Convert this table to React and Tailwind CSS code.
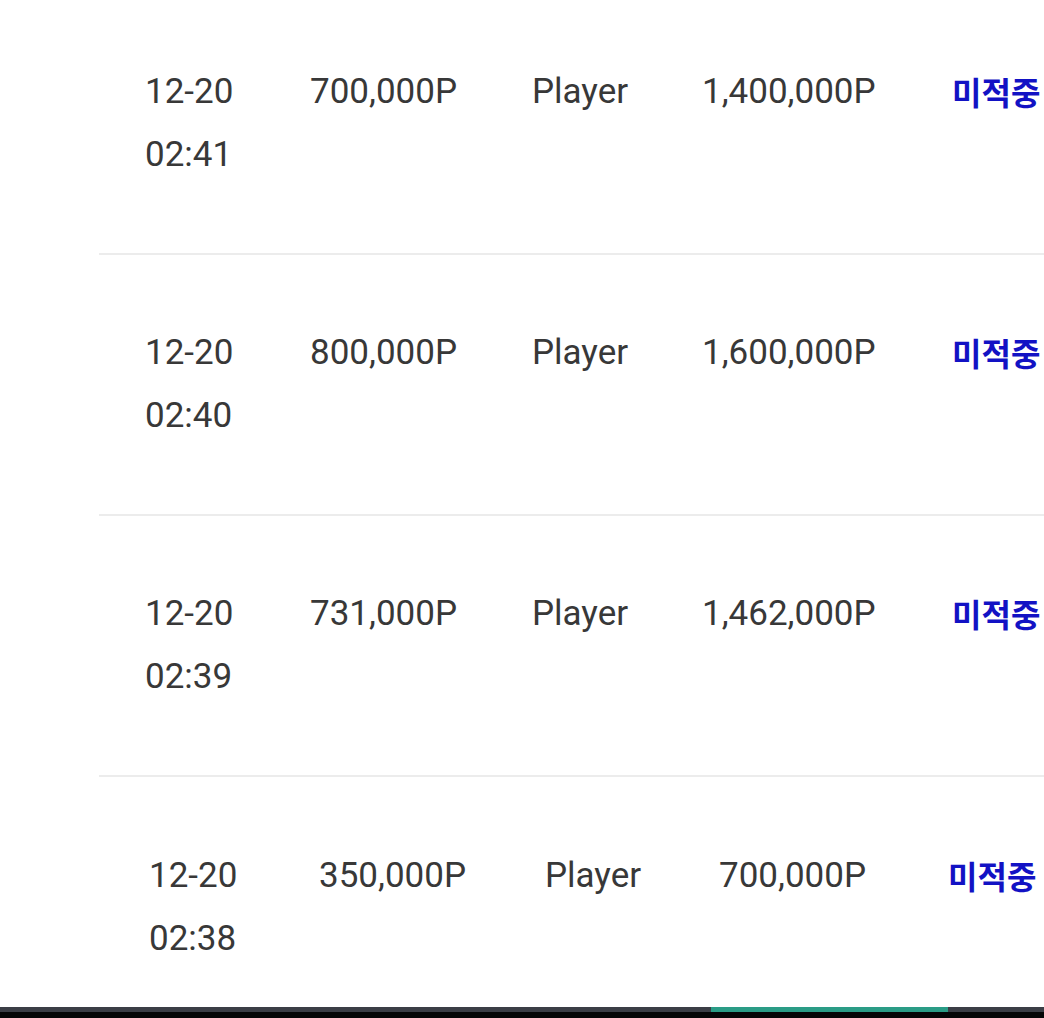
import React from "react";

const rows = [
  { d: "12-20", t: "02:41", bet: "700,000P", pick: "Player", win: "1,400,000P" },
  { d: "12-20", t: "02:40", bet: "800,000P", pick: "Player", win: "1,600,000P" },
  { d: "12-20", t: "02:39", bet: "731,000P", pick: "Player", win: "1,462,000P" },
];

function Row({ r, last, first }) {
  return (
    <div className={`${first ? "pt-[60px] pb-[67px]" : last ? "pt-[67px] pb-[67px]" : "pt-[66px] pb-[67px]"} ml-[99px] border-b-2 border-[#ececec]`}>
      {last ? (
        <div className="flex pl-[50px] text-[35px] leading-[63px] text-[#383838]">
          <div className="w-[170px] shrink-0">
            <div>{r.d}</div>
            <div>{r.t}</div>
          </div>
          <div className="w-[226px] shrink-0">{r.bet}</div>
          <div className="w-[174px] shrink-0">{r.pick}</div>
          <div className="w-[229px] shrink-0">{r.win}</div>
          <div className="shrink-0 whitespace-nowrap font-bold text-[32px] text-[#1212c4] [font-family:'Noto_Sans_CJK_KR',sans-serif]">미적중</div>
        </div>
      ) : (
        <div className="flex pl-[46px] text-[35px] leading-[63px] text-[#383838]">
          <div className="w-[165px] shrink-0">
            <div>{r.d}</div>
            <div>{r.t}</div>
          </div>
          <div className="w-[222px] shrink-0">{r.bet}</div>
          <div className="w-[170px] shrink-0">{r.pick}</div>
          <div className="w-[250px] shrink-0">{r.win}</div>
          <div className="shrink-0 whitespace-nowrap font-bold text-[32px] text-[#1212c4] [font-family:'Noto_Sans_CJK_KR',sans-serif]">미적중</div>
        </div>
      )}
    </div>
  );
}

export default function App() {
  return (
    <div className="w-[1044px] h-[1018px] bg-white overflow-hidden flex flex-col [font-family:Roboto,'Noto_Sans_CJK_KR',sans-serif]">
      <div className="h-[1007px] overflow-hidden">
        {rows.map((r, i) => (
          <Row key={i} r={r} first={i === 0} />
        ))}
        <Row r={{ d: "12-20", t: "02:38", bet: "350,000P", pick: "Player", win: "700,000P" }} last />
      </div>
      <div className="h-[11px] flex flex-col">
        <div className="h-[5px] bg-[#3b3e46] flex">
          <div className="w-[711px]" />
          <div className="w-[237px] bg-[#2a9c86]" />
        </div>
        <div className="flex-1 bg-[#050607]" />
      </div>
    </div>
  );
}
